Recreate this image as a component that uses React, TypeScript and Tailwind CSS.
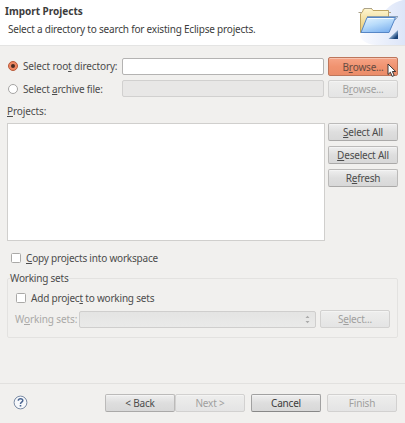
import type { ReactNode } from "react";

const U = ({ children }: { children: ReactNode }) => (
  <span className="underline decoration-1 underline-offset-[1px]">{children}</span>
);

function Button({ children, className = "", tone = "normal" }: { children: ReactNode; className?: string; tone?: "normal" | "disabled" | "hot" | "default" }) {
  const tones = {
    normal: "border-[#bbbab9] border-b-[#aaa9a8] bg-linear-to-b from-[#efefef] via-[#dedede] to-[#d8d8d8] text-[#4c4c4c]",
    default: "border-[#a1a1a1] border-b-[#888] bg-linear-to-b from-[#efefef] via-[#dedede] to-[#d8d8d8] text-[#3c3c3c]",
    disabled: "border-[#d2d1d0] bg-linear-to-b from-[#eeeeed] to-[#e4e4e4] text-[#a09f9e]",
    hot: "border-[#bd765b] bg-linear-to-b from-[#f6a486] via-[#f09370] to-[#eb8d69] text-[#664b42]",
  };
  return (
    <button className={`flex h-[18px] w-[70px] shrink-0 items-center justify-center rounded-[2px] border tracking-[-0.2px] whitespace-nowrap shadow-[inset_0_1px_0_rgba(255,255,255,0.35)] ${tones[tone]} ${className}`}>
      {children}
    </button>
  );
}

function Folder() {
  return (
    <svg className="block h-[45px] w-[54px]" viewBox="351 0 54 45">
      <defs>
        <linearGradient id="sweep" x1="0" y1="0" x2="1" y2="0">
          <stop offset="0" stopColor="#fafbff" />
          <stop offset="1" stopColor="#dce5f8" />
        </linearGradient>
        <linearGradient id="front" x1="0" y1="0" x2="0.6" y2="1">
          <stop offset="0" stopColor="#e7f5ff" />
          <stop offset="0.5" stopColor="#b9dcfb" />
          <stop offset="1" stopColor="#82b5f0" />
        </linearGradient>
        <linearGradient id="back" x1="0" y1="0" x2="0" y2="1">
          <stop offset="0" stopColor="#fff6d0" />
          <stop offset="1" stopColor="#e6c76f" />
        </linearGradient>
        <linearGradient id="corner" x1="0" y1="0" x2="1" y2="1">
          <stop offset="0.35" stopColor="#b8d4ef" />
          <stop offset="0.8" stopColor="#174177" />
        </linearGradient>
      </defs>
      <path d="M405 0H403C391 3 386 9 381 16C376 27 366 32 360 36C362 42 370 45 376 45H405Z" fill="url(#sweep)" />
      <path d="M360.5 32.5V14L363 11V9.5L365 8.5H371.5L373 10.5H388.5V17L365 32.5Z" fill="url(#back)" stroke="#bfa563" />
      <path d="M358.5 12.5H362M388 12.5H391M364 8.5H372" stroke="#aaa28b" fill="none" />
      <path d="M367 17.5H395.5L389 32.5H361Z" fill="url(#front)" stroke="#5686c6" strokeLinejoin="round" />
      <path d="M367 16.5H398M395 20L397.5 17" stroke="#7690ac" strokeWidth=".8" fill="none" />
      <path d="M368 18.5H393.5" stroke="#f4fbff" />
      <path d="M398 30V39H388.5Z" fill="url(#corner)" />
    </svg>
  );
}

const Check = () => <span className="box-border size-[10px] shrink-0 rounded-[1.5px] border border-[#aaa9a7] bg-white" />;

export default function App() {
  return (
    <main className="h-[423px] w-[405px] overflow-hidden bg-[#f1f0ee] font-['Noto_Sans','Open_Sans',sans-serif] text-[10px] leading-[14px] tracking-[-0.2px] text-[#4c4c4c]">
      <header className="flex h-[45px] justify-between bg-white whitespace-nowrap">
        <div className="pt-1">
          <h1 className="pl-[5px] font-bold tracking-normal text-[#3c3c3c]">Import Projects</h1>
          <p className="mt-1 pl-2 text-[#3c3c3c]">Select a directory to search for existing Eclipse projects.</p>
        </div>
        <Folder />
      </header>
      <div className="h-px bg-[#e4e4e3]" />

      <section className="flex h-[337px] flex-col pr-[7px] pl-[7px]">
        <div className="relative mt-[11px] flex h-[19px] items-center">
          <span className="ml-px flex size-[10px] -translate-y-px items-center justify-center rounded-full border border-[#b85b3b] bg-[#ef8762]">
            <span className="size-1 rounded-full bg-[#4a2a20]" />
          </span>
          <span className="ml-[5px] w-[99px] -translate-y-px tracking-[-0.13px] whitespace-nowrap">Select roo<U>t</U> directory:</span>
          <span className="h-[17px] w-[202px] rounded-[2px] border border-[#b4b3b2] bg-white" />
          <Button tone="hot" className="ml-auto h-[19px]">B<U>r</U>owse...</Button>
          <svg className="absolute top-[6px] left-[380px] h-[15px] w-[10px]" viewBox="0 0 10 15">
            <path d="M1 1V11.5L3.4 9.2L5.2 13.4L7.2 12.5L5.4 8.5H8.7Z" fill="#fff" stroke="#222" strokeWidth=".9" />
          </svg>
        </div>
        <div className="mt-[4px] flex h-[18px] items-center">
          <span className="ml-px size-[10px] rounded-full border border-[#a5a4a3] bg-white" />
          <span className="ml-[5px] w-[99px] whitespace-nowrap">Select <U>a</U>rchive file:</span>
          <span className="h-[17px] w-[202px] -translate-y-px rounded-[2px] border border-[#d1d0cf] bg-[#e8e7e6]" />
          <Button tone="disabled" className="ml-auto">B<U>r</U>owse...</Button>
        </div>
        <div className="mt-[6px] h-[19px] tracking-[-0.1px]"><U>P</U>rojects:</div>
        <div className="flex h-[118px] justify-between">
          <div className="w-[318px] border border-[#d0cfcd] bg-white" />
          <div className="flex flex-col gap-[5px]">
            <Button><U>S</U>elect All</Button>
            <Button><U>D</U>eselect All</Button>
            <Button>R<U>e</U>fresh</Button>
          </div>
        </div>
        <label className="mt-[10px] flex h-[14px] items-center gap-[5px] pl-[4px]">
          <Check /><span><U>C</U>opy projects into workspace</span>
        </label>
        <fieldset className="mt-[6px] h-[67px] min-w-0 rounded-[2px] border border-[#e3e2e0]">
          <legend className="ml-[2px] h-[14px]">Working sets</legend>
          <label className="mt-[6px] flex h-[14px] items-center gap-[5px] pl-[8px]">
            <Check /><span>Add projec<U>t</U> to working sets</span>
          </label>
          <div className="mt-[5px] flex items-center pl-[7px] text-[#aaa9a7]">
            <span className="w-[64px] tracking-[-0.1px] whitespace-nowrap">W<U>o</U>rking sets:</span>
            <span className="flex h-[17px] w-[237px] items-center justify-end rounded-[2px] border border-[#cfcecd] bg-linear-to-b from-[#e4e4e3] to-[#eaeae9] pr-[5px]">
              <svg className="h-[9px] w-[5px]" viewBox="0 0 5 9"><path d="M.5 3L2.5 .7L4.5 3ZM.5 6L2.5 8.3L4.5 6Z" fill="#aaa" /></svg>
            </span>
            <Button tone="disabled" className="ml-[4px]">S<U>e</U>lect...</Button>
          </div>
        </fieldset>
      </section>

      <footer className="flex h-[40px] border-t border-[#e2e1df] pt-[10px]">
        <svg className="mt-[1px] ml-[13px] size-[15px]" viewBox="0 0 15 15" fill="none">
          <circle cx="7.5" cy="7.5" r="6.4" stroke="#7a8ba4" fill="#f6f8fb" />
          <path d="M5.3 5.7Q5.3 3.8 7.5 3.8Q9.8 3.8 9.8 5.6Q9.8 6.8 8.4 7.3Q7.5 7.8 7.5 9" stroke="#4a6591" strokeWidth="1.5" />
          <path d="M6.7 10H8.3V11.5H6.7Z" fill="#4a6591" />
        </svg>
        <Button className="ml-[77px]">&lt; Back</Button>
        <Button tone="disabled">Next &gt;</Button>
        <Button tone="default" className="ml-[6px]">Cancel</Button>
        <Button tone="disabled" className="ml-[6px]">Finish</Button>
      </footer>
    </main>
  );
}
